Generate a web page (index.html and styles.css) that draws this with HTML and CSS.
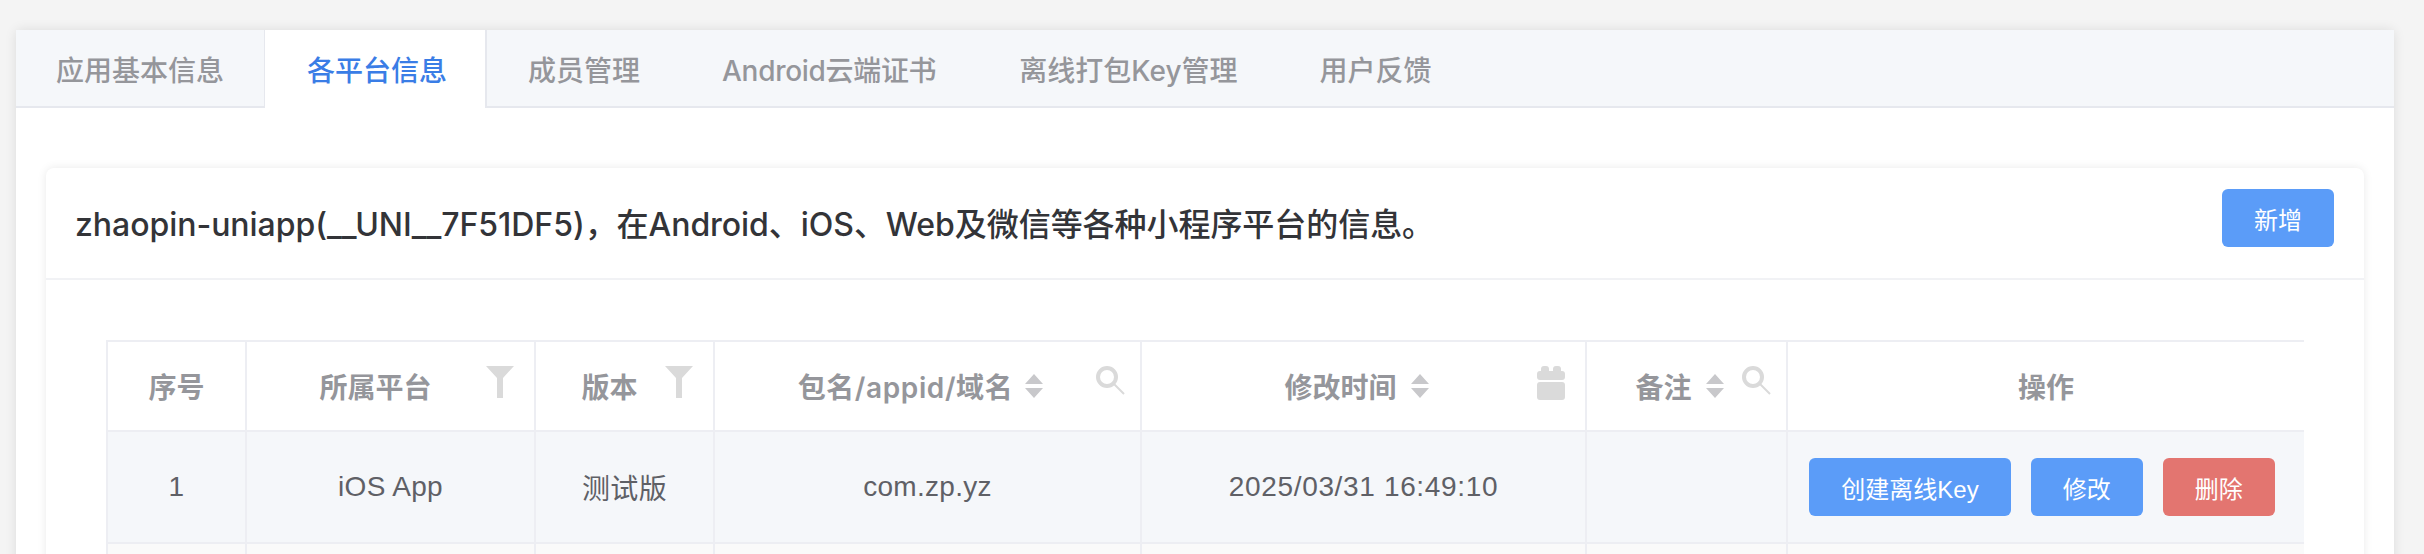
FILE: index.html
```html
<!DOCTYPE html>
<html lang="zh-CN">
<head>
    <meta charset="UTF-8">
    <meta name="viewport" content="width=device-width, initial-scale=1.0">
    <title>各平台信息</title>
    <link rel="stylesheet" href="styles.css">
</head>
<body>
  <div class="tabs">
    <div class="tabs-header">
        <a class="tab">应用基本信息</a>
        <a class="tab active">各平台信息</a>
        <a class="tab">成员管理</a>
        <a class="tab tab-android">Android云端证书</a>
        <a class="tab">离线打包Key管理</a>
        <a class="tab">用户反馈</a>
    </div>
    <div class="tabs-content">
      <div class="card">
        <div class="card-header">
            <span class="card-title">zhaopin-uniapp(__UNI__7F51DF5)，在Android、iOS、Web及微信等各种小程序平台的信息。</span>
            <button class="btn btn-primary">新增</button>
        </div>
        <div class="card-body">
          <table class="info-table">
            <colgroup>
                <col class="col-index">
                <col class="col-platform">
                <col class="col-version">
                <col class="col-appid">
                <col class="col-time">
                <col class="col-remark">
                <col class="col-action">
            </colgroup>
            <thead>
                <tr>
                    <th>序号</th>
                    <th class="has-filter">所属平台
                        <svg class="th-icon icon-filter" width="28" height="32" viewBox="0 0 28 32"><path d="M0 0H28L17 12V32H11V12Z"/></svg>
                    </th>
                    <th class="has-filter">版本
                        <svg class="th-icon icon-filter" width="28" height="32" viewBox="0 0 28 32"><path d="M0 0H28L17 12V32H11V12Z"/></svg>
                    </th>
                    <th class="has-sort"><span class="th-label th-label-wide">包名/appid/域名
                        <svg class="sort" width="18" height="24" viewBox="0 0 18 24"><path d="M9 0L18 10H0ZM0 14H18L9 24Z"/></svg></span>
                        <svg class="th-icon icon-search" width="30" height="29" viewBox="0 0 30 29"><circle cx="11" cy="11" r="9" fill="none" stroke-width="4"/><path d="M18 18L28 28" fill="none" stroke-width="2"/></svg>
                    </th>
                    <th class="has-sort"><span class="th-label">修改时间
                        <svg class="sort" width="18" height="24" viewBox="0 0 18 24"><path d="M9 0L18 10H0ZM0 14H18L9 24Z"/></svg></span>
                        <svg class="th-icon icon-calendar" width="28" height="34" viewBox="0 0 28 34"><rect x="4" y="0" width="8" height="9" rx="3"/><rect x="16" y="0" width="8" height="9" rx="3"/><rect x="0" y="5" width="28" height="9" rx="3"/><rect x="0" y="16" width="28" height="18" rx="3"/></svg>
                    </th>
                    <th class="has-sort"><span class="th-label">备注
                        <svg class="sort" width="18" height="24" viewBox="0 0 18 24"><path d="M9 0L18 10H0ZM0 14H18L9 24Z"/></svg></span>
                        <svg class="th-icon icon-search" width="30" height="29" viewBox="0 0 30 29"><circle cx="11" cy="11" r="9" fill="none" stroke-width="4"/><path d="M18 18L28 28" fill="none" stroke-width="2"/></svg>
                    </th>
                    <th>操作</th>
                </tr>
            </thead>
            <tbody>
                <tr class="row-current">
                    <td>1</td>
                    <td>iOS App</td>
                    <td>测试版</td>
                    <td>com.zp.yz</td>
                    <td class="cell-time">2025/03/31 16:49:10</td>
                    <td></td>
                    <td>
                        <div class="actions">
                            <button class="btn btn-primary">创建离线Key</button>
                            <button class="btn btn-primary">修改</button>
                            <button class="btn btn-danger">删除</button>
                        </div>
                    </td>
                </tr>
                <tr class="row-next">
                    <td></td><td></td><td></td><td></td><td></td><td></td><td></td>
                </tr>
            </tbody>
          </table>
        </div>
      </div>
    </div>
  </div>
</body>
</html>
```

FILE: styles.css
```css
html, body {
    height: 100%;
}

body {
    margin: 0;
    padding: 30px 30px 0 16px;
    box-sizing: border-box;
    overflow: hidden;
    background: #f4f4f4;
    font-family: "Liberation Sans", "Noto Sans CJK SC", sans-serif;
}

.tabs {
    background: #ffffff;
    border-radius: 4px 4px 0 0;
    box-shadow: 0 0 12px rgba(0, 0, 0, 0.1);
}

.tabs-header {
    display: flex;
    height: 78px;
    box-sizing: border-box;
    background: #f5f7fa;
    border-bottom: 2px solid #e6e8ee;
}

.tab {
    display: flex;
    align-items: center;
    height: 78px;
    box-sizing: border-box;
    padding: 0 41px;
    color: #95969b;
    font-family: Inter, "Noto Sans CJK SC", sans-serif;
    font-size: 28px;
    font-weight: 500;
}

.tab:first-child {
    padding: 0 40px;
    border-right: 1px solid #e6e8ee;
}

.tab.active {
    padding: 0 38px 0 42px;
    background: #ffffff;
    border-right: 2px solid #e6e8ee;
    color: #3a7de6;
}

.tab-android {
    padding-right: 42px;
    letter-spacing: -0.3px;
}

.tabs-content {
    padding: 60px 30px 0;
}

.card {
    background: #ffffff;
    border-radius: 8px 8px 0 0;
    box-shadow: 0 0 10px rgba(0, 0, 0, 0.09);
}

.card-header {
    display: flex;
    justify-content: space-between;
    align-items: flex-start;
    height: 112px;
    box-sizing: border-box;
    padding: 21px 30px 0 29px;
    border-bottom: 2px solid #f1f2f5;
}

.card-title {
    align-self: center;
    margin-top: -24px;
    color: #333438;
    font-family: Inter, "Noto Sans CJK SC", sans-serif;
    font-size: 32px;
    font-weight: 500;
    letter-spacing: -0.05px;
}

.card-body {
    padding: 60px 60px 0;
}

.btn {
    height: 58px;
    padding: 0 32px;
    border: none;
    border-radius: 6px;
    color: #ffffff;
    font-family: inherit;
    font-size: 24px;
    white-space: nowrap;
}

.btn-primary {
    background: #5b9cf8;
}

.btn-danger {
    background: #e37570;
}

.info-table {
    width: 2198px;
    table-layout: fixed;
    border-collapse: separate;
    border-spacing: 0;
    border-top: 2px solid #edeef3;
    border-left: 2px solid #edeef3;
}

.col-index { width: 139px; }
.col-platform { width: 289px; }
.col-version { width: 179px; }
.col-appid { width: 427px; }
.col-time { width: 445px; }
.col-remark { width: 201px; }
.col-action { width: 516px; }

.info-table th,
.info-table td {
    padding: 0;
    text-align: center;
    border-right: 2px solid #edeef3;
    border-bottom: 2px solid #edeef3;
    font-size: 28px;
}

.info-table th:last-child,
.info-table td:last-child {
    border-right: none;
}

.info-table th {
    position: relative;
    height: 88px;
    color: #95969b;
    font-family: Inter, "Noto Sans CJK SC", sans-serif;
    font-weight: 600;
}

.info-table td {
    height: 110px;
    color: #5f6066;
    letter-spacing: 0.3px;
}

.info-table .cell-time {
    letter-spacing: 0.65px;
}

.row-current td {
    background: #f5f7fa;
}

.row-next td {
    background: #fafafa;
}

.has-filter {
    padding-right: 30px !important;
}

.has-sort {
    padding-right: 14px !important;
}

.th-label {
    display: inline-flex;
    align-items: center;
    gap: 14px;
}

.th-label-wide {
    gap: 12px;
    letter-spacing: 0.6px;
}

.sort {
    fill: #c8c8cb;
}

.th-icon {
    position: absolute;
    top: 24px;
}

.icon-filter {
    right: 20px;
    fill: #dadada;
}

.icon-search {
    right: 14px;
    stroke: #dadada;
}

.icon-calendar {
    right: 20px;
    fill: #dadada;
}

.actions {
    display: flex;
    justify-content: center;
    gap: 20px;
    padding-right: 8px;
    letter-spacing: 0;
}
```
